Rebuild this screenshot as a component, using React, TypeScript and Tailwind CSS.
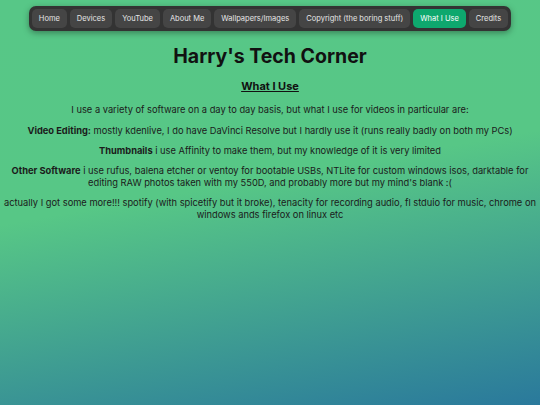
import React from 'react';

const navItems = [
  { label: 'Home' },
  { label: 'Devices' },
  { label: 'YouTube' },
  { label: 'About Me' },
  { label: 'Wallpapers/Images' },
  { label: 'Copyright (the boring stuff)' },
  { label: 'What I Use', active: true },
  { label: 'Credits' },
];

const App: React.FC = () => {
  return (
    <div
      className="min-h-[405px] w-full bg-[linear-gradient(170deg,#57c787_0%,#57c786_45%,#2a799c_100%)] text-[#1b1b1b]"
      style={{ fontFamily: 'Inter, "Noto Sans", sans-serif' }}
    >
      <div className="flex justify-center pt-[6px]">
        <nav className="flex gap-[3px] rounded-[7px] bg-[#333333] p-[3px] shadow-[0_2px_6px_rgba(0,0,0,0.35)]">
          {navItems.map(item => (
            <a
              key={item.label}
              className={`flex h-[19px] items-center rounded-[5px] px-[7px] text-[7.5px] ${
                item.active ? 'bg-[#0ea86e] text-white' : 'bg-[#454545] text-[#e6e6e6]'
              }`}
            >
              {item.label}
            </a>
          ))}
        </nav>
      </div>

      <div className="px-[3px] text-center">
        <h1 className="mt-[12px] text-[19.5px] font-bold leading-[26px] text-[#111]">Harry's Tech Corner</h1>
        <h2 className="mt-[10px] text-[11px] font-bold leading-[14px] text-[#111] underline">What I Use</h2>
        <p className="mt-[11px] text-[9.3px] leading-[12px]">
          I use a variety of software on a day to day basis, but what I use for videos in particular are:
        </p>
        <p className="mt-[9px] text-[9.3px] leading-[12px]">
          <b className="font-bold">Video Editing:</b> mostly kdenlive, I do have DaVinci Resolve but I hardly use it (runs really badly on both my PCs)
        </p>
        <p className="mt-[8px] text-[9.3px] leading-[12px]">
          <b className="font-bold">Thumbnails</b> i use Affinity to make them, but my knowledge of it is very limited
        </p>
        <p className="mt-[8px] text-[9.3px] leading-[12px]">
          <b className="font-bold">Other Software</b> i use rufus, balena etcher or ventoy for bootable USBs, NTLite for custom windows isos, darktable for editing RAW photos taken with my 550D, and probably more but my mind's blank :(
        </p>
        <p className="mt-[8px] text-[9.3px] leading-[12px]">
          actually I got some more!!! spotify (with spicetify but it broke), tenacity for recording audio, fl stduio for music, chrome on windows ands firefox on linux etc
        </p>
      </div>
    </div>
  );
};

export default App;
